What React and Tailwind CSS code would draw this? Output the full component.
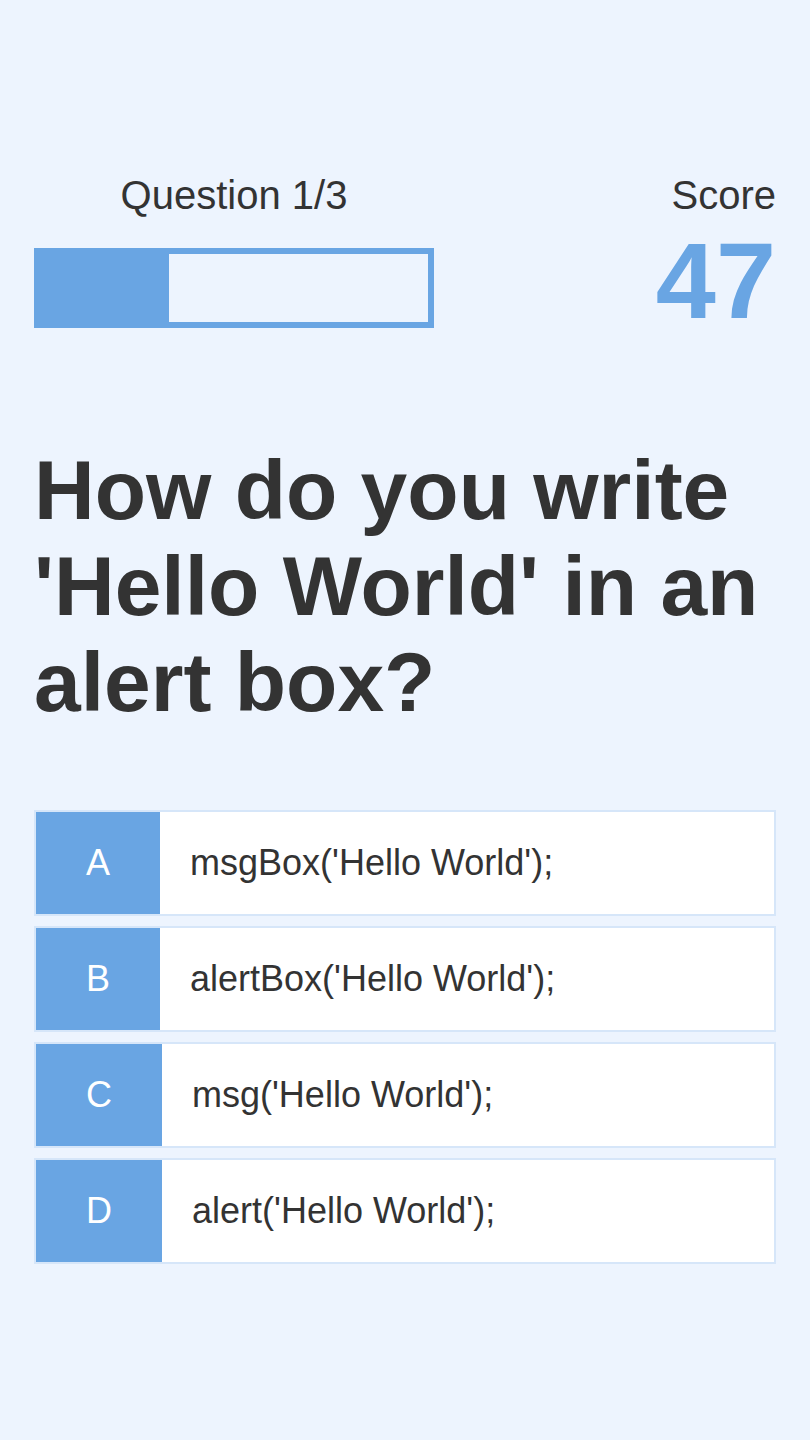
import React, { useState } from 'react';

const questions = [
  {
    question: "How do you write 'Hello World' in an alert box?",
    choices: [
      "msgBox('Hello World');",
      "alertBox('Hello World');",
      "msg('Hello World');",
      "alert('Hello World');",
    ],
    answer: 3,
  },
  {
    question: 'Inside which HTML element do we put the JavaScript?',
    choices: ['<script>', '<javascript>', '<js>', '<scripting>'],
    answer: 0,
  },
  {
    question: 'How do you create a function in JavaScript?',
    choices: [
      'function myFunction()',
      'function:myFunction()',
      'function = myFunction()',
      'myFunction() function',
    ],
    answer: 0,
  },
];

const letters = ['A', 'B', 'C', 'D'];

const ChoiceRow = ({ letter, text, onPick }) => (
  <button
    onClick={onPick}
    className="flex w-full items-stretch border-2 border-[#d6e6f9] bg-white text-left"
  >
    <span className="flex items-center bg-[#69a5e3] px-[50px] text-[36px] leading-[42px] text-white">
      {letter}
    </span>
    <span className="py-[30px] pl-[30px] text-[36px] leading-[42px] text-[#333]">
      {text}
    </span>
  </button>
);

export default function App() {
  const [current] = useState(0);
  const [score, setScore] = useState(47);
  const q = questions[current];
  const progress = ((current + 1) / questions.length) * 100;

  return (
    <div
      className="min-h-[1440px] w-full bg-[#edf4fe] px-[34px] pt-[172px] text-[#333]"
      style={{ fontFamily: '"Liberation Sans", Arial, sans-serif' }}
    >
      {/* HUD */}
      <div className="flex items-start justify-between">
        <div className="w-[400px]">
          <p className="text-center text-[40px] leading-[46px]">
            Question {current + 1}/{questions.length}
          </p>
          <div className="mt-[30px] h-[80px] w-[400px] border-[6px] border-[#69a5e3]">
            <div className="h-full bg-[#69a5e3]" style={{ width: `${progress}%` }}></div>
          </div>
        </div>
        <div className="text-right">
          <p className="text-[40px] leading-[46px]">Score</p>
          <p className="mt-[9px] text-[108px] font-bold leading-[108px] text-[#69a5e3]">
            {score}
          </p>
        </div>
      </div>

      {/* Question */}
      <h1 className="mt-[107px] text-[84px] font-bold leading-[96px]">{q.question}</h1>

      {/* Choices */}
      <div className="mt-[80px] flex flex-col gap-[10px]">
        {q.choices.map((choice, i) => (
          <ChoiceRow
            key={letters[i]}
            letter={letters[i]}
            text={choice}
            onPick={() => i === q.answer && setScore(score + 10)}
          />
        ))}
      </div>
    </div>
  );
}
